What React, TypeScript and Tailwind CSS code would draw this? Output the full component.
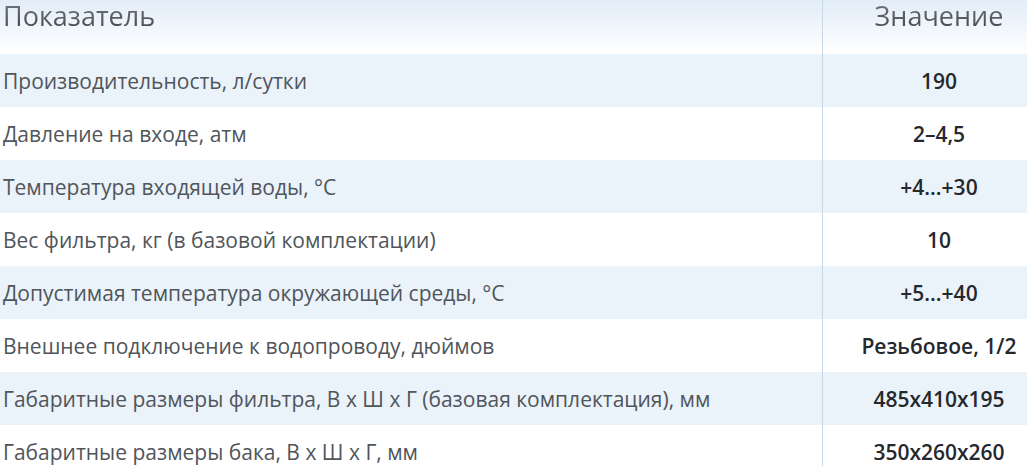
import React from "react";

const rows: [string, string][] = [
  ["Производительность, л/сутки", "190"],
  ["Давление на входе, атм", "2–4,5"],
  ["Температура входящей воды, °С", "+4...+30"],
  ["Вес фильтра, кг (в базовой комплектации)", "10"],
  ["Допустимая температура окружающей среды, °С", "+5...+40"],
  ["Внешнее подключение к водопроводу, дюймов", "Резьбовое, 1/2"],
  ["Габаритные размеры фильтра, В х Ш х Г (базовая комплектация), мм", "485x410x195"],
  ["Габаритные размеры бака, В х Ш х Г, мм", "350x260x260"],
];

export default function App() {
  return (
    <div className="w-[1027px] h-[466px] overflow-hidden bg-white" style={{ fontFamily: '"Open Sans", sans-serif' }}>
      <div className="w-[1055px]">
        <div className="flex h-[54px] bg-gradient-to-b from-[#e2edf8] to-[#ffffff]">
          <div className="w-[823px] border-r border-[#c9d8e6] px-[3px] text-[27px] leading-[34px] -mt-[1px]">
            <span className="bg-gradient-to-b from-[#7a7e84] to-[#3f4348] bg-clip-text text-transparent">Показатель</span>
          </div>
          <div className="flex-1 text-center text-[27px] leading-[34px] -mt-[1px]">
            <span className="bg-gradient-to-b from-[#7a7e84] to-[#3f4348] bg-clip-text text-transparent">Значение</span>
          </div>
        </div>
        {rows.map(([k, v], i) => (
          <div key={i} className={`flex h-[53px] items-center ${i % 2 === 0 ? "bg-[#eaf2fa]" : "bg-white"}`}>
            <div className="w-[823px] h-full flex items-center border-r border-[#c9d8e6] px-[3px] text-[21px] leading-[28px] text-[#50555a]">
              {k}
            </div>
            <div className="flex-1 text-center text-[21px] leading-[28px] font-semibold text-[#25282c]">{v}</div>
          </div>
        ))}
      </div>
    </div>
  );
}
